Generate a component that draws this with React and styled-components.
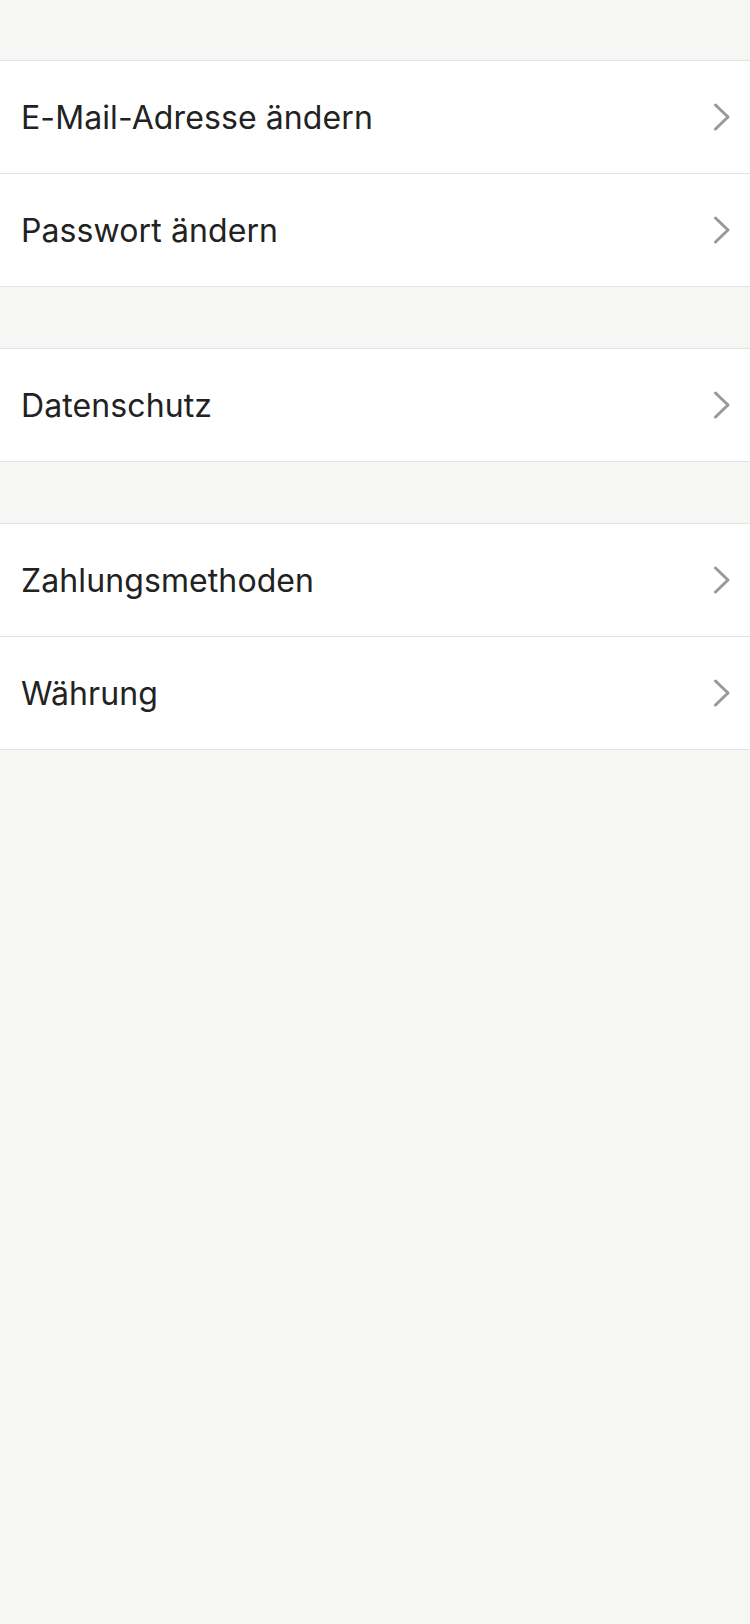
import React from 'react'
import styled, { createGlobalStyle } from 'styled-components'

const GlobalStyle = createGlobalStyle`
  html, body {
    margin: 0;
    padding: 0;
    background: #f6f6f4;
  }
  body {
    font-family: Inter, "Noto Sans", "Liberation Sans", sans-serif;
  }
`

const Page = styled.div`
  min-height: 1624px;
  background: #f6f6f4;
  padding-top: 60px;
  display: flex;
  flex-direction: column;
  gap: 61px;
`

const Group = styled.section`
  background: #fff;
  border-top: 1px solid #e3e3e3;
`

const Row = styled.div`
  height: 112px;
  display: flex;
  align-items: center;
  justify-content: space-between;
  padding: 0 20px 0 21px;
  border-bottom: 1px solid #e3e3e3;
`

const Label = styled.span`
  font-size: 32px;
  color: #222;
  letter-spacing: 0.1px;
`

const Chevron = () => (
  <svg width="18" height="30" viewBox="0 0 18 30">
    <path d="M3.5 3 L16 15 L3.5 27" fill="none" stroke="#999" strokeWidth="3" strokeLinecap="round" strokeLinejoin="round" />
  </svg>
)

const groups = [
  ['E-Mail-Adresse ändern', 'Passwort ändern'],
  ['Datenschutz'],
  ['Zahlungsmethoden', 'Währung'],
]

const App = () => {
  return (
    <>
      <GlobalStyle />
      <Page>
        {groups.map((items, i) => (
          <Group key={i}>
            {items.map((item) => (
              <Row key={item}>
                <Label>{item}</Label>
                <Chevron />
              </Row>
            ))}
          </Group>
        ))}
      </Page>
    </>
  )
}

export default App
